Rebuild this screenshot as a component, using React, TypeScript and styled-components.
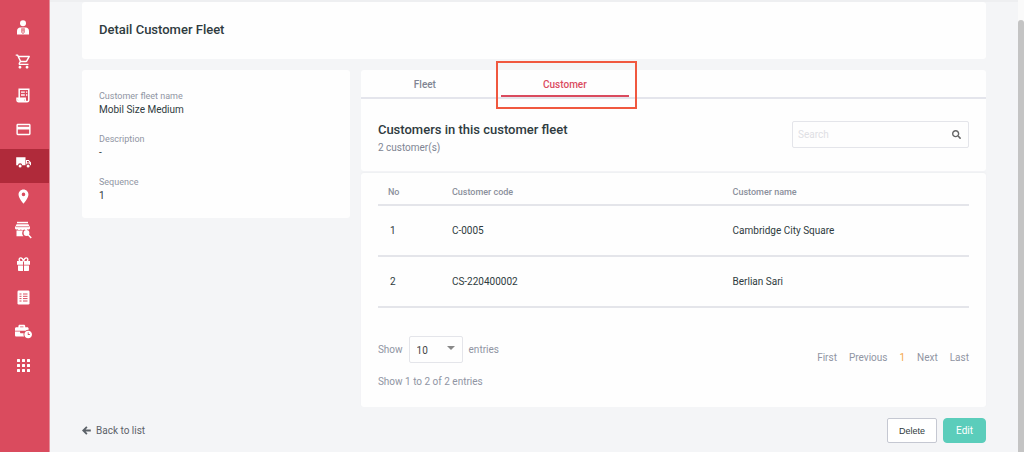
import React from "react";
import styled, { createGlobalStyle } from "styled-components";
import {
  MdOutlineShoppingCart,
  MdOutlineCreditCard,
  MdLocationOn,
} from "react-icons/md";
import { FaSearch, FaBusinessTime } from "react-icons/fa";

const GlobalStyle = createGlobalStyle`
  *, *::before, *::after { box-sizing: border-box; }
  body {
    margin: 0;
    background: #f4f5f7;
    color: #2f3b40;
    font-family: Roboto, "Liberation Sans", sans-serif;
    font-size: 10px;
    line-height: 16px;
  }
  a { color: inherit; text-decoration: none; }
  h1, h2, p, dl, dd, ul { margin: 0; padding: 0; }
  ul { list-style: none; }
`;

const Shell = styled.div`
  display: flex;
  min-height: 100vh;
`;

const Sidebar = styled.nav`
  flex: 0 0 50px;
  background: #da4b5e;
  border-right: 1px solid #e58f9b;
  padding-top: 14px;
`;

const NavList = styled.ul`
  display: flex;
  flex-direction: column;
  height: 371px;
`;

const NavItem = styled.li`
  flex: 1;
  display: flex;
`;

const NavLink = styled.a<{ $active?: boolean }>`
  flex: 1;
  display: flex;
  align-items: center;
  justify-content: center;
  padding: 0 3px 6px 0;
  color: #fff;
  background: ${(p) => (p.$active ? "#b02a3a" : "transparent")};
`;

const Main = styled.main`
  flex: 1;
  min-width: 0;
  display: flex;
  flex-direction: column;
  gap: 11px;
  padding: 0 32px 8px;
  border-top: 2px solid #eeeff1;
`;

const Card = styled.section`
  background: #fefefe;
  border-radius: 3px;
`;

const TitleCard = styled(Card)`
  padding: 18px 17px 19px;
`;

const Title = styled.h1`
  font: 500 13px/20px Roboto, "Liberation Sans", sans-serif;
`;

const Columns = styled.div`
  display: grid;
  grid-template-columns: 3fr 7fr;
  gap: 11px;
  align-items: start;
`;

const InfoCard = styled(Card)`
  padding: 19px 17px 15px;
`;

const InfoList = styled.dl`
  display: flex;
  flex-direction: column;
  gap: 15px;
`;

const InfoLabel = styled.dt`
  font-size: 9px;
  line-height: 14px;
  color: #9095a3;
`;

const InfoValue = styled.dd`
  line-height: 14px;
`;

const Panel = styled.div`
  display: flex;
  flex-direction: column;
  gap: 2px;
`;

const Tabs = styled.div`
  display: flex;
  gap: 12px;
  height: 29px;
  border-bottom: 2px solid #e4e5ec;
`;

const Tab = styled.button<{ $active?: boolean }>`
  width: 128px;
  padding: 4px 0 0;
  border: 0;
  border-bottom: 2px solid ${(p) => (p.$active ? "#da4b5e" : "transparent")};
  background: none;
  font: 500 10px/16px Roboto, "Liberation Sans", sans-serif;
  color: ${(p) => (p.$active ? "#da4b5e" : "#808593")};
`;

const TabFrame = styled.div`
  position: relative;
  display: flex;
  &::after {
    content: "";
    position: absolute;
    inset: -9px -8px -12px -5px;
    border: 2px solid #f0583f;
    pointer-events: none;
  }
`;

const ListHeader = styled.div`
  display: flex;
  justify-content: space-between;
  align-items: flex-start;
  padding: 22px 17px 14px;
`;

const Heading = styled.h2`
  font: 500 13px/18px Roboto, "Liberation Sans", sans-serif;
`;

const Count = styled.p`
  line-height: 18px;
  color: #808593;
`;

const SearchBox = styled.label`
  display: flex;
  align-items: center;
  width: 177px;
  height: 27px;
  padding: 0 7px 0 5px;
  border: 1px solid #e4e5ea;
  border-radius: 2px;
  color: #666;
`;

const SearchInput = styled.input`
  flex: 1;
  min-width: 0;
  padding: 0;
  border: 0;
  outline: 0;
  background: none;
  font: 400 10px/16px Roboto, "Liberation Sans", sans-serif;
  &::placeholder { color: #dfe0e4; opacity: 1; }
`;

const TableCard = styled(Card)`
  padding: 7px 17px 17px;
  box-shadow: 0 -1px 2px #eeeff2;
`;

const Table = styled.table`
  width: 100%;
  border-collapse: collapse;
  table-layout: fixed;
`;

const HeadCell = styled.th<{ $width?: string }>`
  width: ${(p) => p.$width ?? "auto"};
  height: 25px;
  padding: 0;
  border-bottom: 2px solid #e4e5ea;
  text-align: left;
  font-size: 9px;
  font-weight: 500;
  color: #8b909c;
  &:first-child { padding-left: 10px; }
`;

const Cell = styled.td`
  height: 51px;
  padding: 0;
  border-bottom: 2px solid #e4e5ea;
  &:first-child { padding-left: 12px; }
`;

const TableFooter = styled.div`
  display: flex;
  justify-content: space-between;
  padding-top: 28px;
  color: #9095a3;
`;

const Entries = styled.div`
  display: flex;
  flex-direction: column;
  gap: 11px;
`;

const PageSize = styled.label`
  display: flex;
  align-items: center;
  gap: 6px;
`;

const SelectWrap = styled.span`
  display: grid;
  align-items: center;
  > * { grid-area: 1 / 1; }
  > svg { justify-self: end; margin: 0 8px 4px 0; pointer-events: none; }
`;

const Select = styled.select`
  appearance: none;
  width: 54px;
  height: 27px;
  padding: 3px 7px 0;
  border: 1px solid #e4e5ea;
  border-radius: 2px;
  background: #fefefe;
  color: #444;
  font: 400 10px/16px Roboto, "Liberation Sans", sans-serif;
`;

const Pager = styled.nav`
  display: flex;
  gap: 12px;
  padding-top: 14px;
`;

const PageLink = styled.a<{ $current?: boolean }>`
  color: ${(p) => (p.$current ? "#f5a64a" : "#9095a3")};
`;

const ActionBar = styled.footer`
  display: flex;
  align-items: center;
  gap: 6px;
`;

const BackLink = styled.a`
  display: flex;
  align-items: center;
  gap: 5px;
  margin-right: auto;
  color: #5c6269;
`;

const Button = styled.button<{ $primary?: boolean }>`
  height: 25px;
  padding: 0 ${(p) => (p.$primary ? "12px" : "11px")};
  border: 1px solid ${(p) => (p.$primary ? "#5bcdbb" : "#c5c8d2")};
  border-radius: ${(p) => (p.$primary ? "4px" : "2px")};
  background: ${(p) => (p.$primary ? "#5bcdbb" : "#fff")};
  color: ${(p) => (p.$primary ? "#fff" : "#2f3b40")};
  font: ${(p) =>
    p.$primary
      ? '400 10px/16px Roboto, "Liberation Sans", sans-serif'
      : '400 9px/16px "Liberation Sans", sans-serif'};
`;

const Scrollbar = styled.div`
  flex: 0 0 6px;
  display: flex;
  padding-top: 20px;
  background: #fafafa;
  &::before {
    content: "";
    flex: 1;
    border-radius: 3px 3px 0 0;
    background: #c4c4c4;
  }
`;

const UserIcon = () => (
  <svg width="12" height="15" viewBox="0 0 12 15" fill="currentColor">
    <circle cx="6" cy="3.2" r="3" />
    <path fillRule="evenodd" d="M0 14.5V11c0-2.200 1.500-3.500 3.200-3.500h5.600c1.700 0 3.200 1.300 3.200 3.500v3.500zM4.400 8.300v4.200L6 14l1.600-1.500V8.300z" />
    <path d="M5.200 8.600h1.600l-.4 1.300.6 2.300-1 1.200-1-1.200.6-2.300z" opacity=".7" />
  </svg>
);

const ReceiptIcon = () => (
  <svg width="14" height="15" viewBox="0 0 14 15" fill="none" stroke="currentColor" strokeWidth="1.500">
    <path d="M3.200 10V1.200h9.600v10.600c0 1.300-.8 2-1.800 2s-1.800-.8-1.800-2v-1.500H1v1.500c0 1.300.7 2 1.700 2H11" />
    <path d="M1.500 11h7v2.500h-6z" fill="currentColor" stroke="none" />
    <path d="M5 4.200h3.800M5 7h3.800M10 4.200h1.300M10 7h1.300" strokeWidth="1.300" />
  </svg>
);

const TruckIcon = () => (
  <svg width="15" height="11" viewBox="0 0 15 11" fill="currentColor">
    <path d="M.2.300h9.300v8H6.200a2.100 2.100 0 0 0-4.200 0H.2z" />
    <path d="M10 3h2.800L15 5.500v2.800h-.8a2.100 2.100 0 0 0-4.200 0z" />
    <path d="M11 4v1.500h2.600L12.400 4z" fill="#b02a3a" />
    <circle cx="4.100" cy="8.900" r="1.500" />
    <circle cx="12.100" cy="8.900" r="1.500" />
  </svg>
);

const StoreSearchIcon = () => (
  <svg width="18" height="18" viewBox="0 0 18 18" fill="currentColor">
    <path d="M3 .8h11v1.500H3z" />
    <path d="M2.500 3.200h12l1.500 3.300v.8a1.600 1.600 0 0 1-2.500.9 2 2 0 0 1-3.300 0 2 2 0 0 1-3.300 0 2 2 0 0 1-3.300 0A1.600 1.600 0 0 1 1 7.300v-.8z" />
    <path d="M2.500 9.500h6.700a4 4 0 0 0 .3 5.700h-7z" />
    <circle cx="12.500" cy="12" r="2.900" />
    <path d="M14 13.500l3.200 3.500" stroke="currentColor" strokeWidth="1.500" />
    <path d="M2 5.700h13" stroke="#da4b5e" strokeWidth=".7" />
  </svg>
);

const GiftIcon = () => (
  <svg width="13" height="14" viewBox="0 0 13 14" fill="currentColor">
    <path d="M0 4h6v3.700H0zM7 4h6v3.700H7zM1 8.600h5V14H1.800a.8.8 0 0 1-.8-.8zM7 8.600h5v4.600a.8.8 0 0 1-.8.800H7z" />
    <path d="M6.500 4.300C6 2 4.800.9 3.600.9c-1.600 0-2 2.400-.6 3.400M6.500 4.300C7 2 8.200.9 9.400.9c1.600 0 2 2.400.6 3.400" fill="none" stroke="currentColor" strokeWidth="1.400" />
  </svg>
);

const ListIcon = () => (
  <svg width="13" height="15" viewBox="0 0 13 15">
    <rect x=".5" y=".5" width="12" height="14" rx="1.200" fill="currentColor" />
    <path d="M2.500 4h2M2.500 6.300h2M2.500 8.600h2M2.500 11h2M6 4h4.500M6 6.300h4.500M6 8.600h4.500M6 11h4.500" stroke="#da4b5e" strokeWidth="1" />
  </svg>
);

const AppsIcon = () => (
  <svg width="13" height="13" viewBox="0 0 13 13" fill="currentColor">
    {[0, 5, 10].map((y) =>
      [0, 5, 10].map((x) => (
        <rect key={`${x}-${y}`} x={x} y={y} width="3" height="3" rx=".5" />
      ))
    )}
  </svg>
);

const BackArrowIcon = () => (
  <svg width="9" height="9" viewBox="0 0 9 9" fill="none" stroke="currentColor" strokeWidth="1.800">
    <path d="M8.800 4.500H1.500M4.900.8L1.200 4.500l3.700 3.700" />
  </svg>
);

const navItems = [
  { label: "Users", icon: <UserIcon /> },
  { label: "Orders", icon: <MdOutlineShoppingCart size={17} /> },
  { label: "Receipts", icon: <ReceiptIcon /> },
  { label: "Payments", icon: <MdOutlineCreditCard size={17} /> },
  { label: "Fleet", icon: <TruckIcon />, active: true },
  { label: "Locations", icon: <MdLocationOn size={17} /> },
  { label: "Stores", icon: <StoreSearchIcon /> },
  { label: "Rewards", icon: <GiftIcon /> },
  { label: "Reports", icon: <ListIcon /> },
  { label: "Work hours", icon: <FaBusinessTime size={17} /> },
  { label: "Apps", icon: <AppsIcon /> },
];

const details = [
  ["Customer fleet name", "Mobil Size Medium"],
  ["Description", "-"],
  ["Sequence", "1"],
];

const customers = [
  { code: "C-0005", name: "Cambridge City Square" },
  { code: "CS-220400002", name: "Berlian Sari" },
];

export default function App() {
  return (
    <Shell>
      <GlobalStyle />
      <Sidebar aria-label="Main menu">
        <NavList>
          {navItems.map((item) => (
            <NavItem key={item.label}>
              <NavLink href="#" aria-label={item.label} $active={item.active}>
                {item.icon}
              </NavLink>
            </NavItem>
          ))}
        </NavList>
      </Sidebar>
      <Main>
        <TitleCard>
          <Title>Detail Customer Fleet</Title>
        </TitleCard>
        <Columns>
          <InfoCard>
            <InfoList>
              {details.map(([label, value]) => (
                <div key={label}>
                  <InfoLabel>{label}</InfoLabel>
                  <InfoValue>{value}</InfoValue>
                </div>
              ))}
            </InfoList>
          </InfoCard>
          <Panel>
            <Card>
              <Tabs role="tablist">
                <Tab type="button" role="tab" aria-selected={false}>Fleet</Tab>
                <TabFrame>
                  <Tab type="button" role="tab" aria-selected $active>Customer</Tab>
                </TabFrame>
              </Tabs>
              <ListHeader>
                <div>
                  <Heading>Customers in this customer fleet</Heading>
                  <Count>2 customer(s)</Count>
                </div>
                <SearchBox>
                  <SearchInput type="text" placeholder="Search" aria-label="Search" />
                  <FaSearch size={9} />
                </SearchBox>
              </ListHeader>
            </Card>
            <TableCard>
              <Table>
                <thead>
                  <tr>
                    <HeadCell $width="74px">No</HeadCell>
                    <HeadCell>Customer code</HeadCell>
                    <HeadCell $width="40%">Customer name</HeadCell>
                  </tr>
                </thead>
                <tbody>
                  {customers.map((c, i) => (
                    <tr key={c.code}>
                      <Cell>{i + 1}</Cell>
                      <Cell>{c.code}</Cell>
                      <Cell>{c.name}</Cell>
                    </tr>
                  ))}
                </tbody>
              </Table>
              <TableFooter>
                <Entries>
                  <PageSize>
                    Show
                    <SelectWrap>
                      <Select defaultValue="10">
                        <option>10</option>
                        <option>25</option>
                        <option>50</option>
                      </Select>
                      <svg width="8" height="4" viewBox="0 0 8 4">
                        <path d="M0 0h8L4 4z" fill="#888" />
                      </svg>
                    </SelectWrap>
                    entries
                  </PageSize>
                  <p>Show 1 to 2 of 2 entries</p>
                </Entries>
                <Pager aria-label="Pagination">
                  <PageLink href="#">First</PageLink>
                  <PageLink href="#">Previous</PageLink>
                  <PageLink href="#" $current>1</PageLink>
                  <PageLink href="#">Next</PageLink>
                  <PageLink href="#">Last</PageLink>
                </Pager>
              </TableFooter>
            </TableCard>
          </Panel>
        </Columns>
        <ActionBar>
          <BackLink href="#">
            <BackArrowIcon />
            Back to list
          </BackLink>
          <Button type="button">Delete</Button>
          <Button type="button" $primary>Edit</Button>
        </ActionBar>
      </Main>
      <Scrollbar aria-hidden="true" />
    </Shell>
  );
}
